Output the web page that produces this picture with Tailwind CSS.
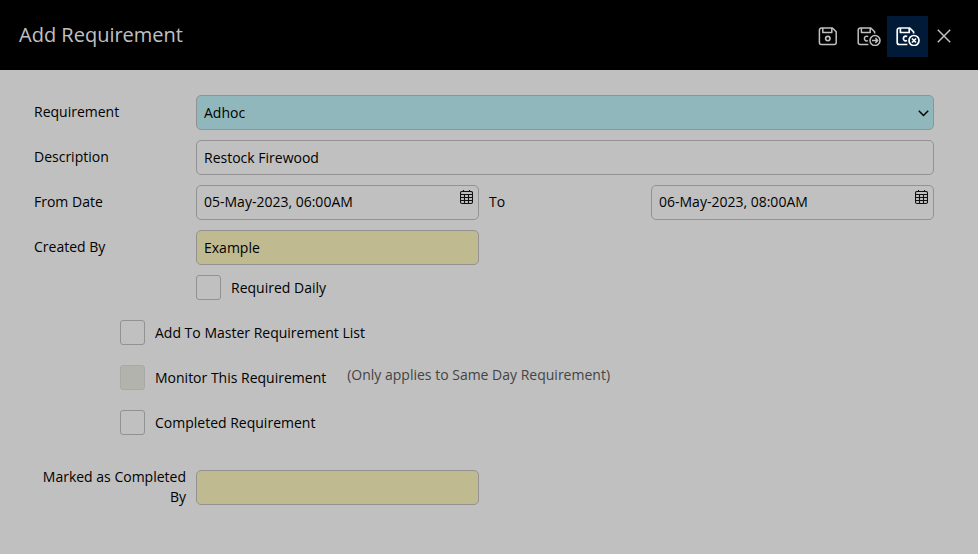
<!DOCTYPE html>
<html lang="en">
<head>
<meta charset="utf-8">
<meta name="viewport" content="width=device-width, initial-scale=1">
<title>Add Requirement</title>
<script src="https://cdn.jsdelivr.net/npm/@tailwindcss/browser@4"></script>
</head>
<body class="min-h-screen bg-[#c0c0c0] font-['Open_Sans','Noto_Sans',sans-serif] text-sm text-black">
<header class="flex h-[70px] items-center justify-between bg-black pr-[19px] pl-[19px] text-[#c0c0c0]">
  <h1 class="text-xl">Add Requirement</h1>
  <div class="flex items-center pt-[3px]">
    <button type="button" aria-label="Save" class="flex h-[41px] w-[46px] items-center justify-center pb-[1px]">
      <svg class="size-5" viewBox="0 0 20 20" fill="none" stroke="currentColor" stroke-width="1.5" stroke-linejoin="round"><path d="M3.6 2h10.8L18.2 5.8v10.7a2 2 0 0 1-2 2H3.4a2 2 0 0 1-2-2V4.2A2.2 2.2 0 0 1 3.6 2ZM4.8 2v4.5h9V2"/><circle cx="9.8" cy="12.6" r="2.2" stroke-width="1.6"/></svg>
    </button>
    <button type="button" aria-label="Save and continue" class="flex h-[41px] w-9 items-center justify-center pb-[1px]">
      <svg class="h-5 w-6" viewBox="0 0 24 20" fill="none" stroke="currentColor" stroke-width="1.5" stroke-linejoin="round"><path d="M11.4 18.5H3.2a2 2 0 0 1-2-2V4.2A2.2 2.2 0 0 1 3.4 2h10.4l3.8 3.8v1.6M4.4 2v4.5h8.8V2M11.2 10.6c-1.4-.8-3.8-.4-3.8 2s2.2 2.7 3.6 2"/><circle cx="18" cy="14.5" r="5"/><path d="M15 14.5h5.6M18.4 12.1l2.4 2.4-2.4 2.4"/></svg>
    </button>
    <button type="button" aria-label="Save and close" class="flex size-[41px] items-center justify-center bg-[#001a38] pb-[1px] text-white">
      <svg class="h-5 w-6" viewBox="0 0 24 20" fill="none" stroke="currentColor" stroke-width="1.7" stroke-linejoin="round"><path d="M11.4 18.5H3.2a2 2 0 0 1-2-2V4.2A2.2 2.2 0 0 1 3.4 2h10.4l3.8 3.8v1.6M4.4 2v4.5h8.8V2M11.2 10.6c-1.4-.8-3.8-.4-3.8 2s2.2 2.7 3.6 2"/><circle cx="18" cy="14.5" r="5"/><path d="m16 12.5 4 4m0-4-4 4"/></svg>
    </button>
    <button type="button" aria-label="Close" class="flex h-[41px] w-[31px] items-center justify-center pb-[1px]">
      <svg class="size-[14px]" viewBox="0 0 14 14" fill="none" stroke="currentColor" stroke-width="1.5"><path d="m.8.8 12.4 12.4M13.2.8.8 13.2"/></svg>
    </button>
  </div>
</header>
<main>
  <form class="pt-[25px] pr-[44px] pb-12 pl-[34px]">
    <div class="grid grid-cols-[162px_1fr_172px_1fr] items-center gap-y-[10px]">
      <label for="requirement" class="pb-[2px]">Requirement</label>
      <div class="relative col-span-3">
        <select id="requirement" class="block h-[35px] w-full appearance-none rounded-[5px] border border-[#929292] bg-[#90b8bc] px-[7px]"><option>Adhoc</option></select>
        <svg class="pointer-events-none absolute top-[15px] right-[5px] h-[7px] w-[11px]" viewBox="0 0 11 7" fill="none" stroke="currentColor" stroke-width="1.5"><path d="m.8.8 4.7 4.7L10.2.8"/></svg>
      </div>

      <label for="description" class="pb-[2px]">Description</label>
      <input id="description" type="text" value="Restock Firewood" class="col-span-3 h-[35px] w-full rounded-[5px] border border-[#929292] px-[7px]">

      <label for="from" class="pb-[2px]">From Date</label>
      <div class="relative">
        <input id="from" type="text" value="05-May-2023, 06:00AM" class="block h-[35px] w-full rounded-[5px] border border-[#929292] pr-8 pb-[2px] pl-[7px]">
        <button type="button" aria-label="Choose from date" class="absolute top-[5px] right-[6px]">
          <svg class="h-[15px] w-[13px]" viewBox="0 0 13 15" fill="none" stroke="#111" stroke-width="1.1"><rect x=".5" y="1.5" width="12" height="12" rx="1.5"/><path d="M3.5 0v2M9.5 0v2M.5 4.5h12M.5 7.5h12M.5 10.5h12M4.5 4.5v9M8.5 4.5v9"/></svg>
        </button>
      </div>
      <label for="to" class="pb-[2px] pl-[10px]">To</label>
      <div class="relative">
        <input id="to" type="text" value="06-May-2023, 08:00AM" class="block h-[35px] w-full rounded-[5px] border border-[#929292] pr-8 pb-[2px] pl-[7px]">
        <button type="button" aria-label="Choose to date" class="absolute top-[5px] right-[6px]">
          <svg class="h-[15px] w-[13px]" viewBox="0 0 13 15" fill="none" stroke="#111" stroke-width="1.1"><rect x=".5" y="1.5" width="12" height="12" rx="1.5"/><path d="M3.5 0v2M9.5 0v2M.5 4.5h12M.5 7.5h12M.5 10.5h12M4.5 4.5v9M8.5 4.5v9"/></svg>
        </button>
      </div>

      <label for="creator" class="pb-[2px]">Created By</label>
      <input id="creator" type="text" value="Example" readonly class="h-[35px] w-full rounded-[5px] border border-[#929292] bg-[#bfba8f] px-[7px]">
      <label class="col-span-3 col-start-2 flex items-center gap-[10px]"><input type="checkbox" class="size-[25px] appearance-none rounded-[3px] border border-[#929292] checked:bg-[#90b8bc]">Required Daily</label>
    </div>

    <div class="mt-5 flex flex-col items-start gap-5 pl-[86px]">
      <label class="flex items-center gap-[10px]"><input type="checkbox" class="size-[25px] appearance-none rounded-[3px] border border-[#929292] checked:bg-[#90b8bc]">Add To Master Requirement List</label>
      <div class="flex items-center gap-[21px]">
        <label class="flex items-center gap-[10px]"><input type="checkbox" disabled class="size-[25px] appearance-none rounded-[3px] border border-[#a9a9a7] bg-[#b2b3ac]">Monitor This Requirement</label>
        <span class="pb-[5px] text-[#444]">(Only applies to Same Day Requirement)</span>
      </div>
      <label class="flex items-center gap-[10px]"><input type="checkbox" class="size-[25px] appearance-none rounded-[3px] border border-[#929292] checked:bg-[#90b8bc]">Completed Requirement</label>
    </div>

    <div class="mt-[32px] grid grid-cols-[162px_1fr_172px_1fr] items-center">
      <label for="completer" class="pr-[10px] text-right">Marked as Completed By</label>
      <input id="completer" type="text" readonly class="h-[35px] w-full rounded-[5px] border border-[#929292] bg-[#bfba8f] px-[7px]">
    </div>
  </form>
</main>
</body>
</html>
